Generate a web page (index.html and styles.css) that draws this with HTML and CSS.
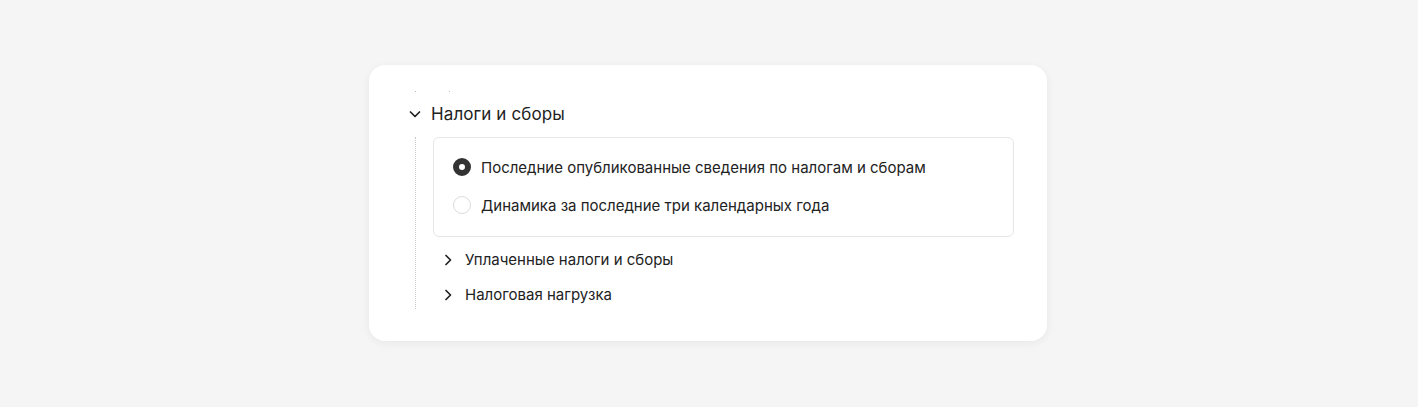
FILE: index.html
```html
<!DOCTYPE html>
<html lang="ru">
<head>
    <meta charset="UTF-8">
    <title>Налоги и сборы</title>
    <link rel="stylesheet" href="styles.css">
</head>
<body>
    <div class="card">
        <div class="tree-stub">
            <span class="dot"></span>
            <span class="dot second"></span>
        </div>

        <div class="group">
            <div class="group-head">
                <svg class="chevron" width="14" height="14" viewBox="0 0 14 14">
                    <path d="M2.5 5 L7 9.5 L11.5 5" fill="none" stroke="#222" stroke-width="1.7" stroke-linecap="round" stroke-linejoin="round"/>
                </svg>
                <span class="group-title">Налоги и сборы</span>
            </div>

            <div class="group-body">
                <div class="options">
                    <label class="option">
                        <span class="radio checked"></span>
                        <span>Последние опубликованные сведения по налогам и сборам</span>
                    </label>
                    <label class="option">
                        <span class="radio"></span>
                        <span>Динамика за последние три календарных года</span>
                    </label>
                </div>

                <div class="sub-list">
                    <div class="sub-item">
                        <svg class="chevron-right" width="12" height="12" viewBox="0 0 12 12">
                            <path d="M4 1.5 L8.5 6 L4 10.5" fill="none" stroke="#222" stroke-width="1.7" stroke-linecap="round" stroke-linejoin="round"/>
                        </svg>
                        <span>Уплаченные налоги и сборы</span>
                    </div>
                    <div class="sub-item">
                        <svg class="chevron-right" width="12" height="12" viewBox="0 0 12 12">
                            <path d="M4 1.5 L8.5 6 L4 10.5" fill="none" stroke="#222" stroke-width="1.7" stroke-linecap="round" stroke-linejoin="round"/>
                        </svg>
                        <span>Налоговая нагрузка</span>
                    </div>
                </div>
            </div>
        </div>
    </div>
</body>
</html>
```

FILE: styles.css
```css
html, body {
    margin: 0;
    height: 100%;
}

body {
    background-color: #f5f5f5;
    font-family: Inter, "Noto Sans", sans-serif;
    color: #222;
    display: flex;
    justify-content: center;
    align-items: flex-start;
}

.card {
    width: 678px;
    height: 276px;
    margin-top: 65px;
    margin-left: -2px;
    box-sizing: border-box;
    padding: 26px 33px 0 39px;
    background-color: #fff;
    border-radius: 16px;
    box-shadow: 0 2px 8px rgba(0, 0, 0, 0.06);
}

.tree-stub {
    position: relative;
    height: 10px;
}

.dot {
    position: absolute;
    top: 0;
    left: 7px;
    width: 1px;
    height: 1px;
    background-color: #bbb;
}
.dot.second {
    left: 41px;
}

.group-head {
    display: flex;
    align-items: center;
    height: 24px;
    margin-top: 1px;
}

.chevron {
    flex-shrink: 0;
    margin-right: 9px;
}

.group-title {
    font-size: 17px;
    letter-spacing: 0.1px;
}

.group-body {
    margin-left: 7px;
    margin-top: 11px;
    padding-left: 17px;
    border-left: 1px dotted #c8c8c8;
}

.options {
    border: 1px solid #e6e6e6;
    border-radius: 6px;
    padding: 18px 19px 20px;
    display: flex;
    flex-direction: column;
    gap: 16px;
}

.option {
    display: flex;
    align-items: center;
    height: 22px;
    font-size: 15px;
}

.radio {
    width: 18px;
    height: 18px;
    box-sizing: border-box;
    border-radius: 50%;
    border: 1px solid #dcdcdc;
    margin-right: 10px;
    flex-shrink: 0;
}

.radio.checked {
    border: 6px solid #333;
    background-color: #fff;
}

.sub-list {
    display: flex;
    flex-direction: column;
    gap: 6px;
    margin-top: 8px;
}

.sub-item {
    display: flex;
    align-items: center;
    height: 29px;
    font-size: 15px;
    padding-left: 9px;
}

.chevron-right {
    flex-shrink: 0;
    margin-right: 11px;
}
```
